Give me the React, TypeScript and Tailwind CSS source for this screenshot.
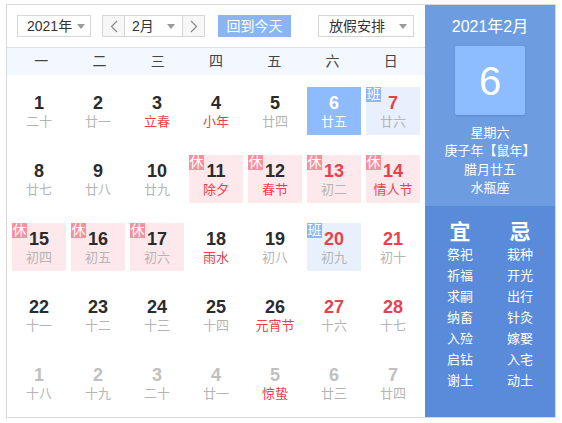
import { FC } from "react";

type Day = {
  n: number;
  lunar: string;
  fest?: boolean;
  tag?: "休" | "班";
  other?: boolean;
  today?: boolean;
};

const weeks: Day[][] = [
  [
    { n: 1, lunar: "二十" },
    { n: 2, lunar: "廿一" },
    { n: 3, lunar: "立春", fest: true },
    { n: 4, lunar: "小年", fest: true },
    { n: 5, lunar: "廿四" },
    { n: 6, lunar: "廿五", today: true },
    { n: 7, lunar: "廿六", tag: "班" },
  ],
  [
    { n: 8, lunar: "廿七" },
    { n: 9, lunar: "廿八" },
    { n: 10, lunar: "廿九" },
    { n: 11, lunar: "除夕", fest: true, tag: "休" },
    { n: 12, lunar: "春节", fest: true, tag: "休" },
    { n: 13, lunar: "初二", tag: "休" },
    { n: 14, lunar: "情人节", fest: true, tag: "休" },
  ],
  [
    { n: 15, lunar: "初四", tag: "休" },
    { n: 16, lunar: "初五", tag: "休" },
    { n: 17, lunar: "初六", tag: "休" },
    { n: 18, lunar: "雨水", fest: true },
    { n: 19, lunar: "初八" },
    { n: 20, lunar: "初九", tag: "班" },
    { n: 21, lunar: "初十" },
  ],
  [
    { n: 22, lunar: "十一" },
    { n: 23, lunar: "十二" },
    { n: 24, lunar: "十三" },
    { n: 25, lunar: "十四" },
    { n: 26, lunar: "元宵节", fest: true },
    { n: 27, lunar: "十六" },
    { n: 28, lunar: "十七" },
  ],
  [
    { n: 1, lunar: "十八", other: true },
    { n: 2, lunar: "十九", other: true },
    { n: 3, lunar: "二十", other: true },
    { n: 4, lunar: "廿一", other: true },
    { n: 5, lunar: "惊蛰", fest: true, other: true },
    { n: 6, lunar: "廿三", other: true },
    { n: 7, lunar: "廿四", other: true },
  ],
];

const yi = ["祭祀", "祈福", "求嗣", "纳畜", "入殓", "启钻", "谢土"];
const ji = ["栽种", "开光", "出行", "针灸", "嫁娶", "入宅", "动土"];

const Caret = () => (
  <svg width="8" height="5" viewBox="0 0 8 5">
    <path d="M0 0h8L4 5z" fill="#9a9a9a" />
  </svg>
);

const Chevron: FC<{ dir: "l" | "r" }> = ({ dir }) => (
  <svg width="8" height="13" viewBox="0 0 8 13">
    <path
      d={dir === "l" ? "M7 1L1.5 6.5 7 12" : "M1 1l5.5 5.5L1 12"}
      fill="none"
      stroke="#8a8a8a"
      strokeWidth="1.2"
    />
  </svg>
);

const Cell: FC<{ d: Day; col: number }> = ({ d, col }) => {
  const weekend = col >= 5;
  let bg = "";
  if (d.today) bg = "bg-[#8dbbfb]";
  else if (d.tag === "休") bg = "bg-[#fde8ec]";
  else if (d.tag === "班") bg = "bg-[#e8f0fd]";

  let numColor = "text-[#2b2b2b]";
  if (d.today) numColor = "text-white";
  else if (d.other) numColor = "text-[#c0c0c0]";
  else if (weekend) numColor = "text-[#e8414b]";

  let lunarColor = "text-[#b5b5b5]";
  if (d.today) lunarColor = "text-white";
  else if (d.fest) lunarColor = "text-[#e8414b]";

  return (
    <div className={`relative h-[48px] pt-[6px] text-center ${bg}`}>
      {d.tag && !d.today && (
        <span
          className={`absolute left-0 top-0 flex h-[15px] w-[15px] items-center justify-center overflow-hidden text-[14px] leading-[15px] text-white ${
            d.tag === "休" ? "bg-[#f7909d]" : "bg-[#8db6f5]"
          }`}
        >
          {d.tag}
        </span>
      )}
      <div className={`text-[18px] font-bold leading-[20px] ${numColor}`}>{d.n}</div>
      <div className={`text-[13px] leading-[18px] ${lunarColor}`}>{d.lunar}</div>
    </div>
  );
};

export default function App() {
  return (
    <div
      className="min-h-screen bg-white pl-[6px] pt-[4px]"
      style={{ fontFamily: '"Liberation Sans", "Noto Sans CJK SC", sans-serif' }}
    >
      <div className="flex h-[414px] w-[550px] border border-[#d9d9d9]">
        {/* calendar */}
        <div className="flex w-[418px] flex-col">
          <div className="flex h-[42px] items-start gap-[11px] pl-[10px] pt-[10px] text-[14px] text-[#333]">
            <div className="flex h-[22px] w-[74px] items-center justify-between border border-[#d6d6d6] bg-white pl-[9px] pr-[5px]">
              <span className="leading-none">2021年</span>
              <Caret />
            </div>
            <div className="flex h-[22px] w-[103px] border border-[#d6d6d6]">
              <div className="flex w-[22px] items-center justify-center border-r border-[#d6d6d6] bg-[#f7f7f7]">
                <Chevron dir="l" />
              </div>
              <div className="flex flex-1 items-center justify-between bg-white pl-[7px] pr-[7px]">
                <span className="leading-none">2月</span>
                <Caret />
              </div>
              <div className="flex w-[22px] items-center justify-center border-l border-[#d6d6d6] bg-[#f7f7f7]">
                <Chevron dir="r" />
              </div>
            </div>
            <div className="ml-[2px] flex h-[22px] w-[73px] items-center justify-center bg-[#8ab4f2] text-white">
              回到今天
            </div>
            <div className="ml-[16px] flex h-[22px] w-[96px] items-center justify-between border border-[#d6d6d6] bg-white pl-[10px] pr-[6px]">
              <span className="leading-none">放假安排</span>
              <Caret />
            </div>
          </div>
          <div className="grid h-[28px] grid-cols-7 items-center border-t border-[#e0e0e0] bg-[#f3f7fe] px-[5px] text-center text-[14px] text-[#444]">
            {["一", "二", "三", "四", "五", "六", "日"].map((w) => (
              <span key={w}>{w}</span>
            ))}
          </div>
          <div className="flex flex-col gap-[20px] px-[5px] pt-[12px]">
            {weeks.map((wk, i) => (
              <div key={i} className="grid grid-cols-7 gap-[5px]">
                {wk.map((d, j) => (
                  <Cell key={j} d={d} col={j} />
                ))}
              </div>
            ))}
          </div>
        </div>

        {/* side panel */}
        <div className="flex w-[130px] flex-col text-white">
          <div className="flex h-[201px] flex-col items-center bg-[#6d9ce0] pt-[12px]">
            <div className="text-[16px] leading-[20px]">2021年2月</div>
            <div className="mt-[9px] flex h-[69px] w-[70px] items-center justify-center rounded-[2px] bg-[#8dbcff] text-[40px] font-light shadow-[0_1px_2px_rgba(40,80,150,0.25)]">
              6
            </div>
            <div className="mt-[9px] text-center text-[13px] leading-[18.3px]">
              <div>星期六</div>
              <div>庚子年【鼠年】</div>
              <div>腊月廿五</div>
              <div>水瓶座</div>
            </div>
          </div>
          <div className="grid flex-1 grid-cols-2 bg-[#5a8bdb] px-[5px] pt-[14px] text-center">
            {[
              ["宜", yi],
              ["忌", ji],
            ].map(([h, items]) => (
              <div key={h as string}>
                <div className="text-[21px] font-bold leading-[24px]">{h as string}</div>
                {(items as string[]).map((t) => (
                  <div key={t} className="text-[13px] leading-[21px]">
                    {t}
                  </div>
                ))}
              </div>
            ))}
          </div>
        </div>
      </div>
    </div>
  );
}
